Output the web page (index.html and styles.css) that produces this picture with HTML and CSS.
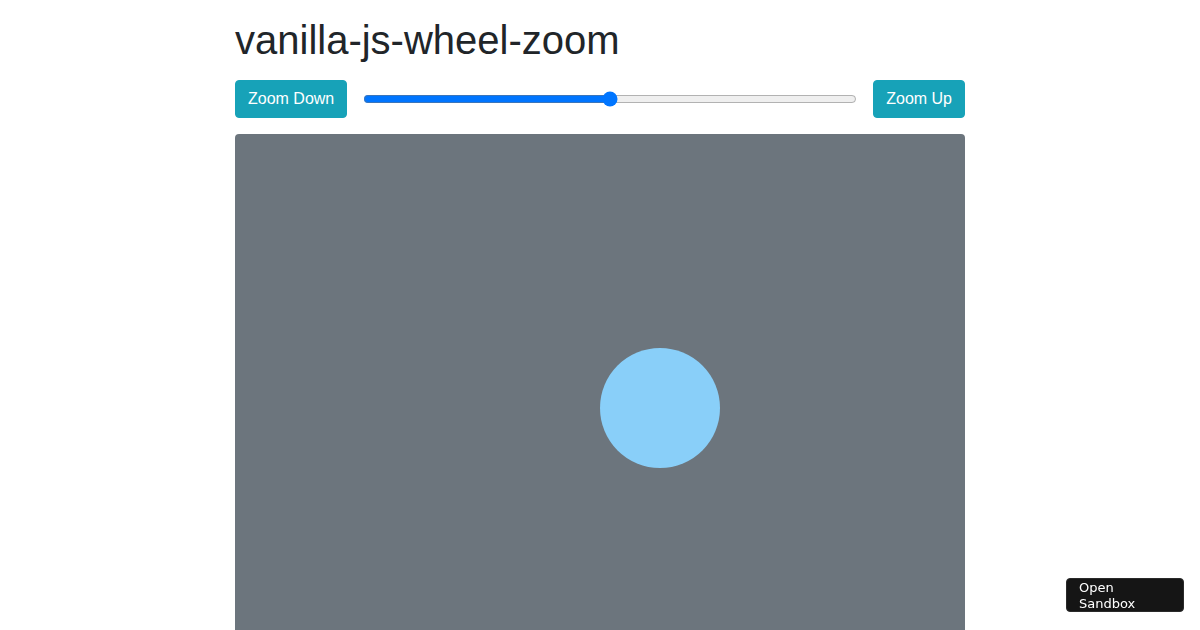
FILE: index.html
```html
<!DOCTYPE html>
<html lang="en">
<head>
<meta charset="utf-8">
<title>vanilla-js-wheel-zoom</title>
<link rel="stylesheet" href="styles.css">
</head>
<body>
<div class="container">
  <h1 class="title">vanilla-js-wheel-zoom</h1>
  <div class="controls">
    <button class="btn">Zoom Down</button>
    <input class="range" type="range" min="0" max="100" value="50">
    <button class="btn">Zoom Up</button>
  </div>
  <div class="viewport">
    <div class="circle"></div>
  </div>
</div>
<a class="sandbox" href="#">Open Sandbox</a>
</body>
</html>
```
FILE: styles.css
```css
html, body {
  margin: 0;
  padding: 0;
  background: #fff;
  overflow: hidden;
}
body {
  font-family: "Liberation Sans", Arial, sans-serif;
  color: #212529;
  font-size: 16px;
  line-height: 1.5;
}
.container {
  width: 730px;
  margin: 0 auto;
  padding-top: 16px;
}
.title {
  margin: 0 0 16px 0;
  font-size: 40px;
  font-weight: 400;
  line-height: 48px;
}
.controls {
  display: flex;
  align-items: center;
  gap: 16px;
  margin-bottom: 16px;
}
.btn {
  font-family: "Liberation Sans", Arial, sans-serif;
  font-size: 16px;
  line-height: 24px;
  padding: 6px 12px;
  border: 1px solid #17a2b8;
  background: #17a2b8;
  color: #fff;
  border-radius: 4px;
  cursor: pointer;
}
.range {
  flex: 1;
  margin: 0;
  accent-color: #0075ff;
}
.viewport {
  height: 496px;
  background: #6c757d;
  border-radius: 4px 4px 0 0;
  overflow: hidden;
}
.circle {
  width: 120px;
  height: 120px;
  border-radius: 50%;
  background: #89cff9;
  margin-left: 365px;
  margin-top: 214px;
  display: inline-block;
  vertical-align: top;
}
.sandbox {
  position: fixed;
  right: 16px;
  bottom: 18px;
  width: 118px;
  height: 34px;
  box-sizing: border-box;
  padding: 1px 12px;
  background: #151515;
  border: 1px solid #2a2a2a;
  border-radius: 4px;
  color: #fff;
  font-family: "DejaVu Sans", Verdana, sans-serif;
  font-size: 13px;
  line-height: 16px;
  text-decoration: none;
}
```
